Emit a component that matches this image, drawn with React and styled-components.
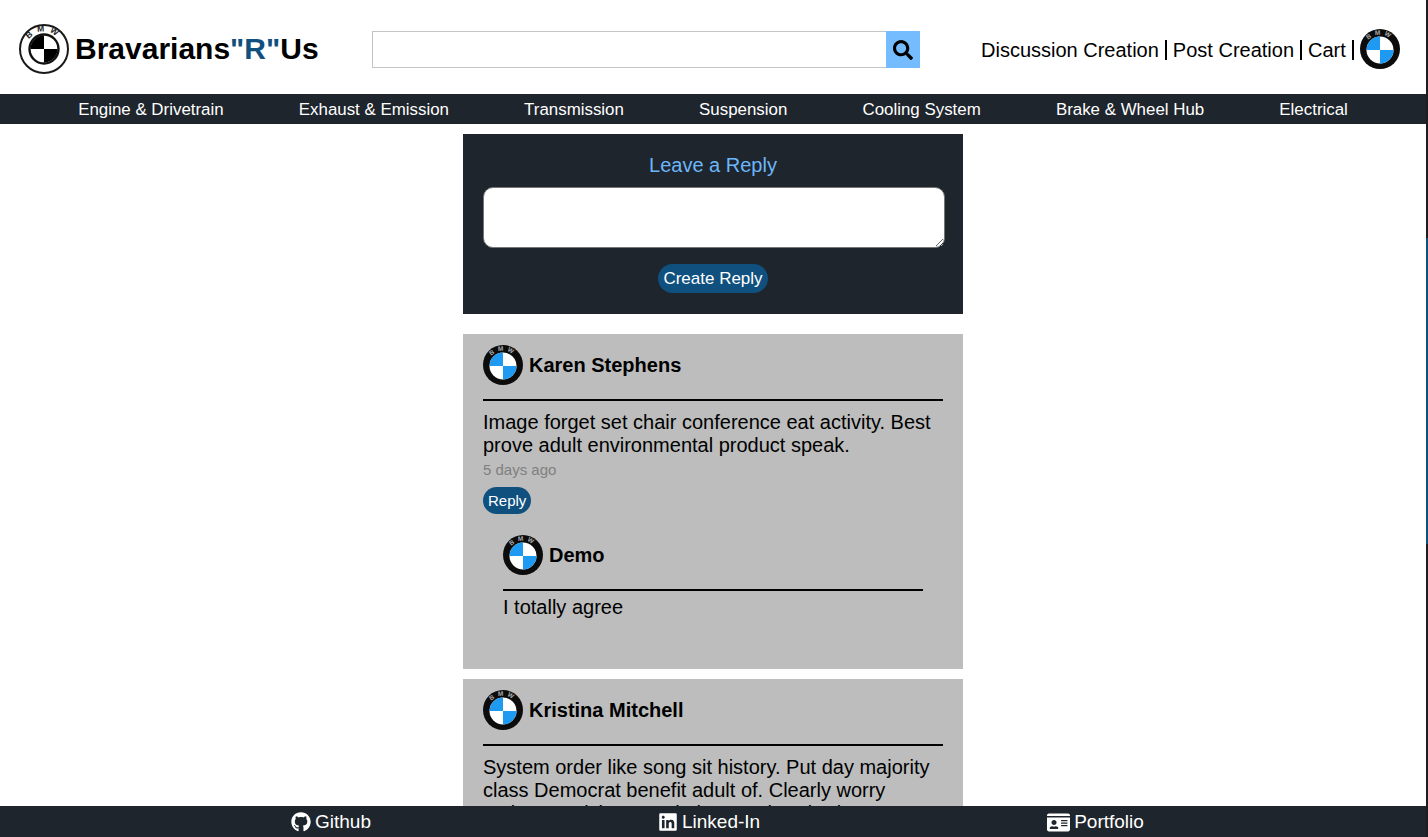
import React from "react";
import styled, { createGlobalStyle } from "styled-components";
import { FaSearch, FaGithub, FaLinkedin, FaIdCard } from "react-icons/fa";

const Global = createGlobalStyle`
  html, body { margin: 0; padding: 0; height: 100%; overflow: hidden; background: #fff; }
  body { font-family: "Liberation Sans", Arial, sans-serif; color: #000; }
  #root { height: 100%; }
  * { box-sizing: border-box; }
`;

const Page = styled.div`
  height: 100vh;
  width: 1426px;
  display: flex;
  flex-direction: column;
  overflow: hidden;
`;
const Header = styled.header`
  height: 94px;
  flex: none;
  display: flex;
  align-items: center;
  padding: 4px 0 0 19px;
`;
const Brand = styled.div`
  width: 353px;
  flex: none;
  display: flex;
  align-items: center;
  gap: 6px;
`;
const Title = styled.h1`
  margin: 0;
  font-size: 30px;
  font-weight: 700;
  line-height: 34px;
  white-space: nowrap;
`;
const Accent = styled.span`
  color: #10507f;
`;
const Search = styled.form`
  width: 548px;
  height: 37px;
  flex: none;
  display: flex;
  margin-top: 1px;
`;
const SearchInput = styled.input`
  flex: 1;
  min-width: 0;
  height: 100%;
  border: 1px solid #c4c4c4;
  border-right: 0;
  background: #fff;
  outline: none;
`;
const SearchButton = styled.button`
  width: 34px;
  height: 100%;
  border: 0;
  padding: 0;
  background: #74bcfd;
  color: #000;
  font-size: 20px;
  display: flex;
  align-items: center;
  justify-content: center;
`;
const Links = styled.nav`
  margin-left: 61px;
  display: flex;
  align-items: center;
  font-size: 20px;
  white-space: nowrap;
`;
const TextLink = styled.a`
  color: #000;
  text-decoration: none;
  line-height: 20px;
  height: 20px;
  margin-top: 2px;
  padding-right: 6px;
  margin-right: 6px;
  border-right: 2px solid #000;
`;
const Categories = styled.nav`
  height: 30px;
  flex: none;
  background: #1e252c;
  display: flex;
  align-items: center;
  justify-content: space-evenly;
  padding: 1px 3px 0;
`;
const Category = styled.a`
  color: #fff;
  font-size: 16.9px;
  text-decoration: none;
  white-space: nowrap;
`;
const Main = styled.main`
  flex: 1;
  min-height: 0;
  overflow: hidden;
  display: flex;
  flex-direction: column;
  align-items: center;
  padding-top: 10px;
`;
const ReplyBox = styled.form`
  width: 500px;
  height: 180px;
  flex: none;
  background: #1e252c;
  padding: 20px;
  margin-bottom: 20px;
  display: flex;
  flex-direction: column;
  align-items: center;
`;
const ReplyTitle = styled.h2`
  margin: 0 0 10px;
  font-size: 20px;
  font-weight: 400;
  line-height: 23px;
  color: #6cb6fa;
`;
const ReplyArea = styled.textarea`
  width: 462px;
  height: 61px;
  flex: none;
  align-self: flex-start;
  border: 1px solid #767676;
  border-radius: 10px;
  background: #fff;
  display: block;
  outline: none;
`;
const Pill = styled.button`
  border: 0;
  background: #10507f;
  color: #fff;
  font-family: inherit;
  font-size: ${(p) => p.$size}px;
  line-height: 18px;
  height: ${(p) => p.$h}px;
  padding: 0 5px;
  border-radius: 15px;
  flex: none;
  white-space: nowrap;
`;
const CreateButton = styled(Pill)`
  margin-top: 16px;
`;
const Card = styled.article`
  width: 500px;
  flex: none;
  background: #bcbdbc;
  padding: 10px 20px;
  margin-bottom: 10px;
  min-height: ${(p) => p.$min || 0}px;
`;
const Author = styled.div`
  display: flex;
  align-items: center;
  gap: 6px;
  height: 42px;
  margin-bottom: 13px;
`;
const AuthorName = styled.strong`
  font-size: 20px;
  font-weight: 700;
`;
const Rule = styled.hr`
  margin: 0 0 ${(p) => p.$gap}px;
  height: 2px;
  border: 0;
  background: #000;
`;
const Body = styled.p`
  margin: 0;
  font-size: 20px;
  line-height: 23px;
`;
const Stamp = styled.div`
  margin-top: 5px;
  font-size: 15px;
  line-height: 16px;
  color: #808080;
`;
const ReplyButton = styled(Pill)`
  display: block;
  margin-top: 9px;
`;
const Nested = styled.div`
  margin: 20px 0 0;
  padding: 0 20px;
`;
const Footer = styled.footer`
  height: 31px;
  flex: none;
  background: #1e252c;
  display: flex;
  align-items: center;
  padding: 1px 0 0 291px;
  gap: 287px;
`;
const FooterLink = styled.a`
  color: #fff;
  font-size: 19px;
  text-decoration: none;
  display: flex;
  align-items: center;
  gap: 4px;
  white-space: nowrap;
  svg { width: ${(p) => p.$icon}px; height: ${(p) => p.$icon}px; flex: none; }
`;
const ScrollTrack = styled.div`
  position: fixed;
  top: 0;
  right: 0;
  width: 2px;
  height: 100vh;
  background: #1e1c1e;
`;
const ScrollThumb = styled.div`
  position: absolute;
  top: 238px;
  left: 0;
  width: 100%;
  height: 306px;
  background: #10507f;
`;

function BmwMono() {
  return (
    <svg width="50" height="50" viewBox="0 0 50 50" style={{ flex: "none" }}>
      <defs>
        <path id="monoArc" d="M7.5 25 A17.5 17.5 0 0 1 42.5 25" />
      </defs>
      <circle cx="25" cy="25" r="24" fill="#fff" stroke="#1a1a1a" strokeWidth="2" />
      <circle cx="25" cy="25" r="14.5" fill="#fff" stroke="#111" strokeWidth="2.4" />
      <path d="M25 25V11.5A13.5 13.5 0 0 0 11.5 25Z" fill="#000" />
      <path d="M25 25V38.5A13.5 13.5 0 0 0 38.5 25Z" fill="#000" />
      <text fontFamily="Liberation Sans, Arial, sans-serif" fontWeight="700" fontSize="8.5" fill="#222">
        <textPath href="#monoArc" startOffset="50%" textAnchor="middle" letterSpacing="4.6">BMW</textPath>
      </text>
    </svg>
  );
}

function BmwBlue({ id }) {
  return (
    <svg width="40" height="40" viewBox="0 0 40 40" style={{ flex: "none" }}>
      <defs>
        <path id={id} d="M5.2 20.5 A14.8 14.8 0 0 1 34.8 20.5" />
      </defs>
      <circle cx="20" cy="20" r="20" fill="#0c0c0c" />
      <circle cx="20" cy="21" r="13.5" fill="#fff" />
      <path d="M20 21V7.5A13.5 13.5 0 0 0 6.5 21Z" fill="#1f9af2" />
      <path d="M20 21V34.5A13.5 13.5 0 0 0 33.5 21Z" fill="#1f9af2" />
      <text fontFamily="Liberation Sans, Arial, sans-serif" fontWeight="700" fontSize="6.5" fill="#aaa">
        <textPath href={`#${id}`} startOffset="50%" textAnchor="middle" letterSpacing="3.4">BMW</textPath>
      </text>
    </svg>
  );
}

const categories = [
  "Engine & Drivetrain",
  "Exhaust & Emission",
  "Transmission",
  "Suspension",
  "Cooling System",
  "Brake & Wheel Hub",
  "Electrical",
];

export default function App() {
  return (
    <>
      <Global />
      <Page>
        <Header>
          <Brand>
            <BmwMono />
            <Title>
              Bravarians<Accent>"R"</Accent>Us
            </Title>
          </Brand>
          <Search>
            <SearchInput />
            <SearchButton type="button" aria-label="Search">
              <FaSearch />
            </SearchButton>
          </Search>
          <Links>
            <TextLink>Discussion Creation</TextLink>
            <TextLink>Post Creation</TextLink>
            <TextLink>Cart</TextLink>
            <BmwBlue id="arcHead" />
          </Links>
        </Header>
        <Categories>
          {categories.map((c) => (
            <Category key={c}>{c}</Category>
          ))}
        </Categories>
        <Main>
          <ReplyBox>
            <ReplyTitle>Leave a Reply</ReplyTitle>
            <ReplyArea />
            <CreateButton type="button" $h={29} $size={17}>Create Reply</CreateButton>
          </ReplyBox>
          <Card $min={335}>
            <Author>
              <BmwBlue id="arcKaren" />
              <AuthorName>Karen Stephens</AuthorName>
            </Author>
            <Rule $gap={10} />
            <Body>Image forget set chair conference eat activity. Best prove adult environmental product speak.</Body>
            <Stamp>5 days ago</Stamp>
            <ReplyButton type="button" $h={27} $size={15}>Reply</ReplyButton>
            <Nested>
              <Author>
                <BmwBlue id="arcDemo" />
                <AuthorName>Demo</AuthorName>
              </Author>
              <Rule $gap={5} />
              <Body>I totally agree</Body>
            </Nested>
          </Card>
          <Card>
            <Author>
              <BmwBlue id="arcKristina" />
              <AuthorName>Kristina Mitchell</AuthorName>
            </Author>
            <Rule $gap={10} />
            <Body>System order like song sit history. Put day majority class Democrat benefit adult of. Clearly worry nation. Decision people interest hundred.</Body>
          </Card>
        </Main>
        <Footer>
          <FooterLink $icon={20}><FaGithub />Github</FooterLink>
          <FooterLink $icon={20}><FaLinkedin />Linked-In</FooterLink>
          <FooterLink $icon={23}><FaIdCard />Portfolio</FooterLink>
        </Footer>
      </Page>
      <ScrollTrack>
        <ScrollThumb />
      </ScrollTrack>
    </>
  );
}
